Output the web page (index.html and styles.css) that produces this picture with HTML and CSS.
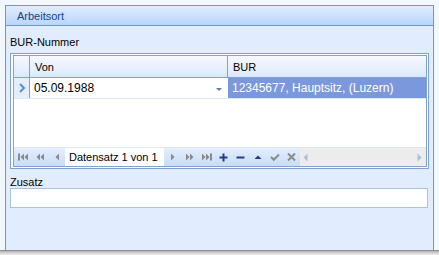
FILE: index.html
```html
<!DOCTYPE html>
<html lang="de">
<head>
    <meta charset="UTF-8">
    <title>Arbeitsort</title>
    <link rel="stylesheet" href="styles.css">
</head>
<body>
    <div class="page">
        <div class="group">
            <div class="group-head">Arbeitsort</div>
            <div class="group-body">
                <div class="label">BUR-Nummer</div>
                <div class="grid">
                    <div class="grid-inner">
                        <div class="row head">
                            <div class="ind"></div>
                            <div class="cell von">Von</div>
                            <div class="cell bur">BUR</div>
                        </div>
                        <div class="row data">
                            <div class="ind">
                                <svg width="8" height="10" viewBox="0 0 8 10"><path d="M2 1 L6 5 L2 9" fill="none" stroke="#5b8fd6" stroke-width="2"/></svg>
                            </div>
                            <div class="cell von">05.09.1988<span class="drop"></span></div>
                            <div class="cell bur sel">12345677, Hauptsitz, (Luzern)</div>
                        </div>
                        <div class="empty"></div>
                        <div class="nav">
                            <div class="btns">
                                <span class="btn"><svg width="10" height="8" viewBox="0 0 10 8"><rect x="0" y="0.5" width="2" height="7" fill="#8a8a8a"/><path d="M6 0.5 L2.5 4 L6 7.5Z M10 0.5 L6.5 4 L10 7.5Z" fill="#8a8a8a"/></svg></span>
                                <span class="btn"><svg width="8" height="8" viewBox="0 0 8 8"><path d="M4 0.5 L0.5 4 L4 7.5Z M8 0.5 L4.5 4 L8 7.5Z" fill="#8a8a8a"/></svg></span>
                                <span class="btn"><svg width="4" height="8" viewBox="0 0 4 8"><path d="M4 0.5 L0.5 4 L4 7.5Z" fill="#8a8a8a"/></svg></span>
                            </div>
                            <div class="pos">Datensatz 1 von 1</div>
                            <div class="btns">
                                <span class="btn"><svg width="4" height="8" viewBox="0 0 4 8"><path d="M0 0.5 L3.5 4 L0 7.5Z" fill="#8a8a8a"/></svg></span>
                                <span class="btn"><svg width="8" height="8" viewBox="0 0 8 8"><path d="M0 0.5 L3.5 4 L0 7.5Z M4 0.5 L7.5 4 L4 7.5Z" fill="#8a8a8a"/></svg></span>
                                <span class="btn"><svg width="10" height="8" viewBox="0 0 10 8"><path d="M0 0.5 L3.5 4 L0 7.5Z M4 0.5 L7.5 4 L4 7.5Z" fill="#8a8a8a"/><rect x="8" y="0.5" width="2" height="7" fill="#8a8a8a"/></svg></span>
                                <span class="btn"><svg width="9" height="9" viewBox="0 0 9 9"><path d="M4.5 0.5 V8.5 M0.5 4.5 H8.5" stroke="#1e3f82" stroke-width="2"/></svg></span>
                                <span class="btn"><svg width="9" height="9" viewBox="0 0 9 9"><path d="M0.5 4.5 H8.5" stroke="#1e3f82" stroke-width="2"/></svg></span>
                                <span class="btn"><svg width="8" height="6" viewBox="0 0 8 6"><path d="M0.5 5 L4 1.5 L7.5 5Z" fill="#1e3f82"/></svg></span>
                                <span class="btn"><svg width="10" height="8" viewBox="0 0 10 8"><path d="M1 4 L3.8 6.8 L9 1.5" fill="none" stroke="#8a8a8a" stroke-width="2"/></svg></span>
                                <span class="btn"><svg width="9" height="8" viewBox="0 0 9 8"><path d="M1 0.5 L8 7.5 M8 0.5 L1 7.5" stroke="#8a8a8a" stroke-width="2"/></svg></span>
                            </div>
                            <div class="hscroll">
                                <svg width="5" height="9" viewBox="0 0 5 9"><path d="M4.5 0.5 L0.5 4.5 L4.5 8.5Z" fill="#a9bfdd"/></svg>
                                <svg width="5" height="9" viewBox="0 0 5 9"><path d="M0.5 0.5 L4.5 4.5 L0.5 8.5Z" fill="#a9bfdd"/></svg>
                            </div>
                        </div>
                    </div>
                </div>
                <div class="label zusatz">Zusatz</div>
                <div class="input"></div>
            </div>
        </div>
    </div>
    <div class="footer"></div>
</body>
</html>
```

FILE: styles.css
```css
* {
    margin: 0;
    padding: 0;
    box-sizing: border-box;
}
body {
    background: #f3f7fe;
    font-family: "Liberation Sans", Arial, sans-serif;
    font-size: 11px;
    color: #000;
    width: 439px;
    height: 255px;
    overflow: hidden;
}
.page {
    height: 250px;
    padding: 5px 5px 0 5px;
}
.group {
    width: 429px;
    height: 245px;
    border: 1px solid #6c97d4;
    border-bottom: none;
    background: #e1edfe;
    display: flex;
    flex-direction: column;
}
.group-head {
    height: 20px;
    border-bottom: 1px solid #6c97d4;
    background: linear-gradient(#e1edfe, #b9d5fc);
    color: #15428b;
    padding-left: 11px;
    line-height: 20px;
}
.group-body {
    padding: 0 4px;
}
.label {
    height: 16px;
    line-height: 16px;
    margin-top: 8px;
}
.grid {
    margin-top: 3px;
    width: 419px;
    height: 116px;
    border: 1px solid #7ea1d6;
    background: #fff;
    padding: 1px 1px 1px 2px;
}
.grid-inner {
    height: 100%;
    border: 1px solid #7ea1d6;
    display: flex;
    flex-direction: column;
}
.row {
    display: flex;
}
.ind {
    width: 16px;
    flex: none;
    border-right: 1px solid #7ea1d6;
    display: flex;
    align-items: center;
    justify-content: center;
}
.cell {
    padding-left: 4px;
    display: flex;
    align-items: center;
}
.von {
    width: 198px;
    border-right: 1px solid #7ea1d6;
    position: relative;
}
.bur {
    flex: 1;
}
.head {
    height: 22px;
    background: linear-gradient(#f6f9fe, #dce9fc);
    border-bottom: 1px solid #7ea1d6;
}
.head .cell {
    padding-left: 5px;
}
.data {
    height: 21px;
    border-bottom: 1px solid #dfe8f6;
    font-size: 12px;
}
.data .ind {
    background: #e4eefd;
}
.data .von {
    border-right: none;
}
.drop {
    position: absolute;
    right: 6px;
    top: 10px;
    border-left: 3px solid transparent;
    border-right: 3px solid transparent;
    border-top: 3px solid #5a7fb8;
}
.sel {
    background: #7b98dc;
    color: #fff;
}
.empty {
    flex: 1;
}
.nav {
    height: 19px;
    display: flex;
    align-items: stretch;
    border-top: 1px solid #dfe8f6;
    background: linear-gradient(#e4eefd, #c8dcfa);
}
.btns {
    display: flex;
    align-items: center;
}
.btn {
    width: 17px;
    display: flex;
    justify-content: center;
    align-items: center;
}
.pos {
    background: #fff;
    display: flex;
    align-items: center;
    padding-left: 4px;
    width: 99px;
    white-space: nowrap;
}
.hscroll {
    flex: 1;
    background: #ececec;
    display: flex;
    align-items: center;
    justify-content: space-between;
    padding: 0 4px 0 3px;
}
.zusatz {
    margin-top: 7px;
    height: 12px;
    line-height: 12px;
}
.input {
    width: 418px;
    height: 20px;
    border: 1px solid #a9c1e3;
    background: #fff;
}
.footer {
    height: 5px;
    background: linear-gradient(#7f7f7f, #c8c8c8 40%, #ececec);
}
```
